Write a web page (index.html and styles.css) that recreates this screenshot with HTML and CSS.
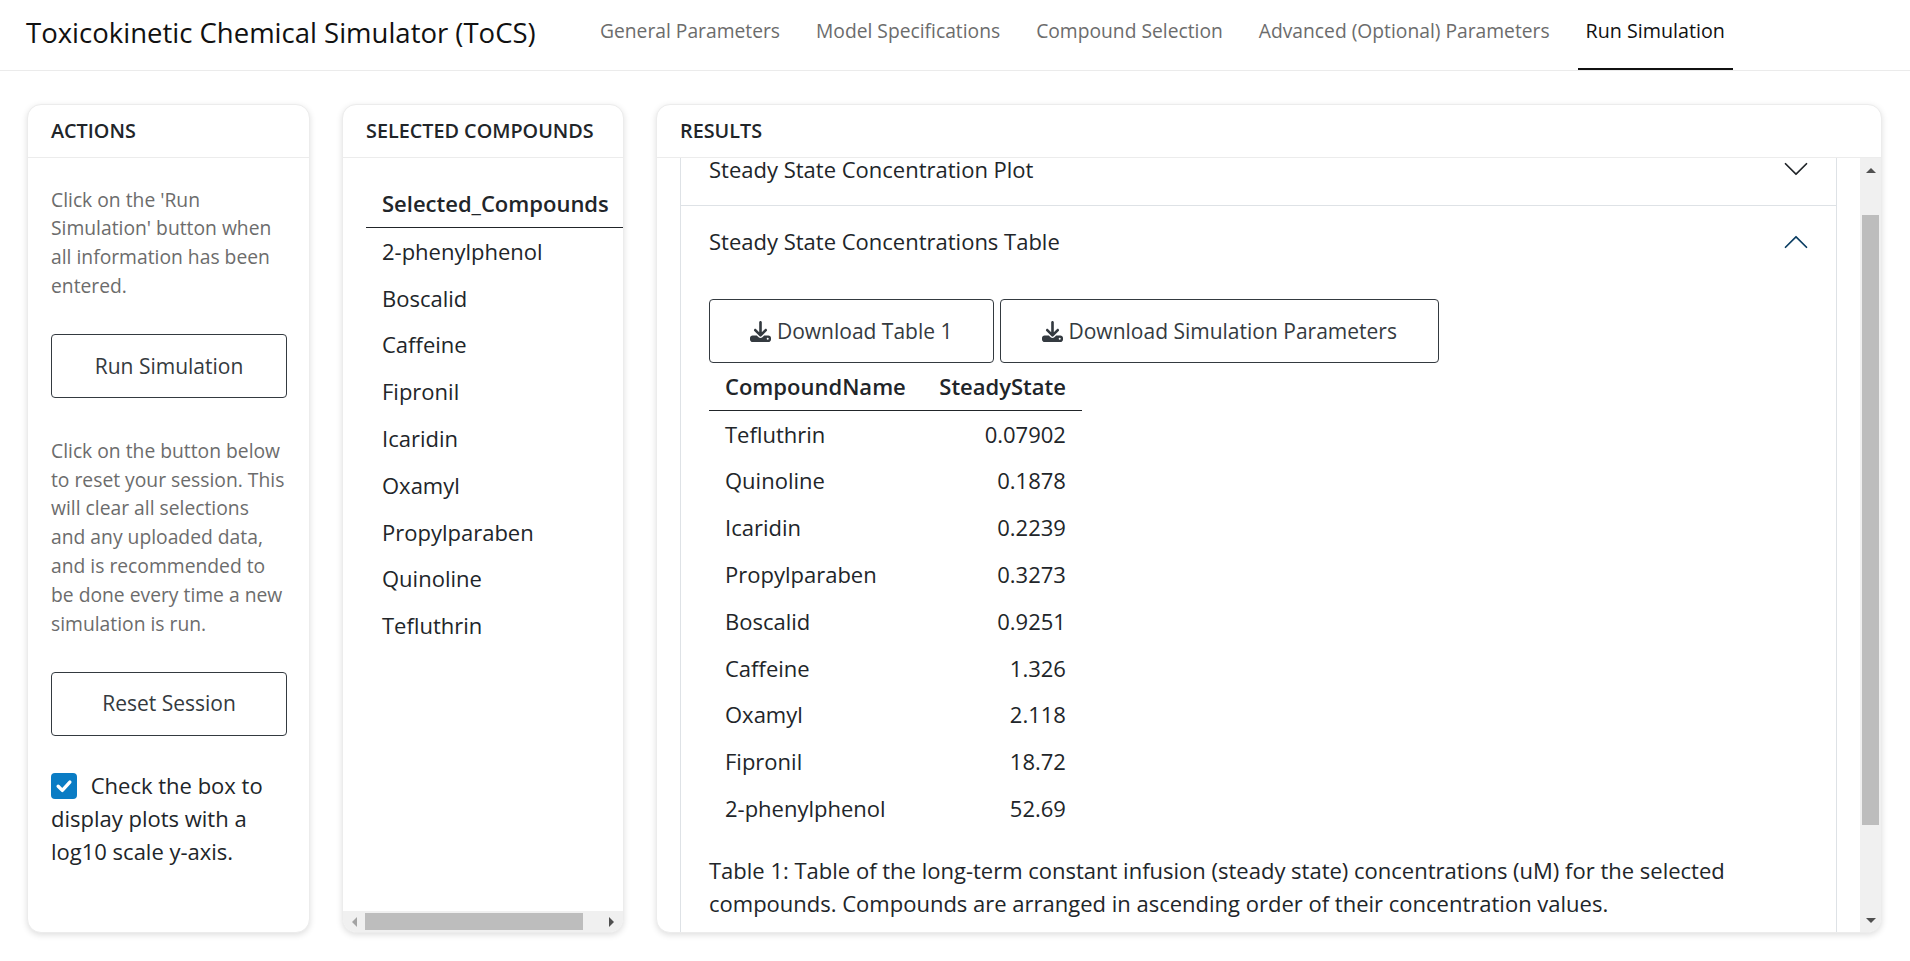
FILE: index.html
```html
<!DOCTYPE html>
<html lang="en">
<head>
  <meta charset="UTF-8" />
  <title>Toxicokinetic Chemical Simulator (ToCS)</title>
  <link rel="stylesheet" href="styles.css">
</head>
<body>

  <header class="navbar">
    <div class="brand">Toxicokinetic Chemical Simulator (ToCS)</div>
    <nav class="tabs">
      <a class="tab">General Parameters</a>
      <a class="tab">Model Specifications</a>
      <a class="tab">Compound Selection</a>
      <a class="tab">Advanced (Optional) Parameters</a>
      <a class="tab active">Run Simulation</a>
    </nav>
  </header>

  <main class="layout">

    <section class="card">
      <div class="card-header">ACTIONS</div>
      <div class="actions-body">
        <p class="muted">Click on the 'Run Simulation' button when all information has been entered.</p>
        <button class="btn btn-run">Run Simulation</button>
        <p class="muted">Click on the button below to reset your session. This will clear all selections and any uploaded data, and is recommended to be done every time a new simulation is run.</p>
        <button class="btn btn-reset">Reset Session</button>
        <div class="check-row">
          <span class="checkbox">
            <svg viewBox="0 0 20 20" width="26" height="26"><path d="M5.5 10.2l3.2 3.2 5.8-6.4" fill="none" stroke="#fff" stroke-width="2.6" stroke-linecap="round" stroke-linejoin="round"/></svg>
          </span>
          Check the box to display plots with a log10 scale y-axis.
        </div>
      </div>
    </section>

    <section class="card">
      <div class="card-header">SELECTED COMPOUNDS</div>
      <div class="compounds-body">
        <table class="data-table">
          <thead>
            <tr><th>Selected_Compounds</th></tr>
          </thead>
          <tbody>
            <tr><td>2-phenylphenol</td></tr>
            <tr><td>Boscalid</td></tr>
            <tr><td>Caffeine</td></tr>
            <tr><td>Fipronil</td></tr>
            <tr><td>Icaridin</td></tr>
            <tr><td>Oxamyl</td></tr>
            <tr><td>Propylparaben</td></tr>
            <tr><td>Quinoline</td></tr>
            <tr><td>Tefluthrin</td></tr>
          </tbody>
        </table>
      </div>
      <div class="hscroll">
        <span class="arrow arrow-left"></span>
        <span class="hscroll-thumb"></span>
        <span class="arrow arrow-right"></span>
      </div>
    </section>

    <section class="card">
      <div class="card-header">RESULTS</div>
      <div class="results-body">
        <div class="results-view">
          <div class="accordion">
            <div class="acc-item">
              <div class="acc-title">
                <span>Steady State Concentration Plot</span>
                <svg class="chevron" viewBox="0 0 16 16" width="28" height="28"><path fill="#212529" d="M1.646 4.646a.5.5 0 0 1 .708 0L8 10.293l5.646-5.647a.5.5 0 0 1 .708.708l-6 6a.5.5 0 0 1-.708 0l-6-6a.5.5 0 0 1 0-.708z"/></svg>
              </div>
            </div>
            <div class="acc-item">
              <div class="acc-title">
                <span>Steady State Concentrations Table</span>
                <svg class="chevron" viewBox="0 0 16 16" width="28" height="28"><path fill="#0a3d62" d="M1.646 11.354a.5.5 0 0 0 .708 0L8 5.707l5.646 5.647a.5.5 0 0 0 .708-.708l-6-6a.5.5 0 0 0-.708 0l-6 6a.5.5 0 0 0 0 .708z"/></svg>
              </div>
              <div class="acc-content">
                <div class="download-row">
                  <button class="btn btn-table">
                    <svg class="dl-icon" viewBox="0 0 512 512" width="21" height="21"><path d="M288 32c0-17.7-14.3-32-32-32s-32 14.3-32 32V274.7l-73.4-73.4c-12.5-12.5-32.8-12.5-45.3 0s-12.5 32.8 0 45.3l128 128c12.5 12.5 32.8 12.5 45.3 0l128-128c12.5-12.5 12.5-32.8 0-45.3s-32.8-12.5-45.3 0L288 274.7V32zM64 352c-35.3 0-64 28.7-64 64v32c0 35.3 28.7 64 64 64H448c35.3 0 64-28.7 64-64V416c0-35.3-28.7-64-64-64H346.5l-45.3 45.3c-25 25-65.5 25-90.5 0L165.5 352H64zm368 56a24 24 0 1 1 0 48 24 24 0 1 1 0-48z"/></svg>
                    Download Table 1
                  </button>
                  <button class="btn btn-params">
                    <svg class="dl-icon" viewBox="0 0 512 512" width="21" height="21"><path d="M288 32c0-17.7-14.3-32-32-32s-32 14.3-32 32V274.7l-73.4-73.4c-12.5-12.5-32.8-12.5-45.3 0s-12.5 32.8 0 45.3l128 128c12.5 12.5 32.8 12.5 45.3 0l128-128c12.5-12.5 12.5-32.8 0-45.3s-32.8-12.5-45.3 0L288 274.7V32zM64 352c-35.3 0-64 28.7-64 64v32c0 35.3 28.7 64 64 64H448c35.3 0 64-28.7 64-64V416c0-35.3-28.7-64-64-64H346.5l-45.3 45.3c-25 25-65.5 25-90.5 0L165.5 352H64zm368 56a24 24 0 1 1 0 48 24 24 0 1 1 0-48z"/></svg>
                    Download Simulation Parameters
                  </button>
                </div>
                <table class="data-table results-table">
                  <thead>
                    <tr><th>CompoundName</th><th class="num">SteadyState</th></tr>
                  </thead>
                  <tbody>
                    <tr><td>Tefluthrin</td><td class="num">0.07902</td></tr>
                    <tr><td>Quinoline</td><td class="num">0.1878</td></tr>
                    <tr><td>Icaridin</td><td class="num">0.2239</td></tr>
                    <tr><td>Propylparaben</td><td class="num">0.3273</td></tr>
                    <tr><td>Boscalid</td><td class="num">0.9251</td></tr>
                    <tr><td>Caffeine</td><td class="num">1.326</td></tr>
                    <tr><td>Oxamyl</td><td class="num">2.118</td></tr>
                    <tr><td>Fipronil</td><td class="num">18.72</td></tr>
                    <tr><td>2-phenylphenol</td><td class="num">52.69</td></tr>
                  </tbody>
                </table>
                <p class="caption">Table 1: Table of the long-term constant infusion (steady state) concentrations (uM) for the selected compounds. Compounds are arranged in ascending order of their concentration values.</p>
              </div>
            </div>
          </div>
        </div>
        <div class="vscroll">
          <span class="arrow arrow-up"></span>
          <span class="vscroll-thumb"></span>
          <span class="arrow arrow-down"></span>
        </div>
      </div>
    </section>

  </main>

</body>
</html>
```

FILE: styles.css
```css
* {
  box-sizing: border-box;
}

body {
  font-family: 'Open Sans', sans-serif;
  font-size: 22px;
  color: #212529;
  background-color: white;
  margin: 0;
  height: 961px;
  overflow: hidden;
}

/* top bar */
.navbar {
  height: 71px;
  border-bottom: 1px solid #ebebeb;
  display: flex;
  padding-left: 26px;
}

.brand {
  font-size: 27.5px;
  color: #111;
  line-height: 65px;
  width: 566px;
}

.tabs {
  display: flex;
  gap: 20px;
}

.tab {
  font-size: 19.25px;
  color: #6c6c6c;
  padding: 17px 8px 0;
  height: 70px;
}

.tab.active {
  font-size: 19.7px;
  color: #111;
  border-bottom: 2px solid #111;
}

/* panels */
.layout {
  display: grid;
  grid-template-columns: 283px 282px 1fr;
  column-gap: 32px;
  padding: 33px 28px 0 27px;
  height: 861px;
}

.card {
  background: white;
  border: 1px solid #ececec;
  border-radius: 14px;
  box-shadow: 0 2px 6px rgba(0,0,0,0.13);
  display: flex;
  flex-direction: column;
  overflow: hidden;
  height: 829px;
}

.card-header {
  flex: none;
  height: 53px;
  padding: 12px 23px 0;
  font-size: 19.8px;
  font-weight: 600;
  color: #212529;
  border-bottom: 1px solid #ececec;
}

/* left column */
.actions-body {
  padding: 27.6px 23px 0;
}

.muted {
  font-size: 19.3px;
  line-height: 28.8px;
  color: #6c6c6c;
  margin: 0 0 33.4px;
}

.btn {
  display: block;
  height: 64px;
  font-family: inherit;
  font-size: 21px;
  color: #343a40;
  background: white;
  border: 1px solid #343a40;
  border-radius: 4px;
}

.btn-run,
.btn-reset {
  width: 236px;
}

.btn-run {
  margin-bottom: 38.6px;
}

.btn-reset {
  padding-bottom: 3px;
}

.check-row {
  margin-top: 33px;
  line-height: 33px;
}

.checkbox {
  display: inline-block;
  width: 26px;
  height: 26px;
  background: #0a7cc4;
  border-radius: 4px;
  margin-right: 8px;
  vertical-align: -5px;
}

.checkbox svg {
  display: block;
}

/* tables */
.data-table {
  border-collapse: collapse;
}

.data-table th,
.data-table td {
  padding: 8px 16px;
  line-height: 30.8px;
  text-align: left;
  white-space: nowrap;
}

.data-table th {
  font-weight: 600;
  border-bottom: 1px solid #212529;
}

.data-table .num {
  text-align: right;
}

.results-table th:first-child,
.results-table td:first-child {
  padding-right: 17.5px;
}

/* selected compounds */
.compounds-body {
  flex: 1;
  overflow: hidden;
  padding: 22px 0 0 23px;
}

.hscroll {
  flex: none;
  height: 21px;
  background: #f0f0f0;
  display: flex;
  align-items: center;
  padding: 0 9px;
}

.hscroll-thumb {
  width: 218px;
  height: 17px;
  background: #bdbdbd;
  margin-left: 8px;
  margin-right: auto;
}

/* results */
.results-body {
  flex: 1;
  min-height: 0;
  display: flex;
  padding-left: 23px;
}

.results-view {
  width: 1157px;
  overflow: hidden;
}

.accordion {
  border-left: 1px solid #dee2e6;
  border-right: 1px solid #dee2e6;
  margin-top: -25px;
}

.acc-item {
  border-bottom: 1px solid #dee2e6;
}

.acc-title {
  height: 72px;
  padding: 0 28px;
  display: flex;
  align-items: center;
  justify-content: space-between;
}

.acc-item + .acc-item .acc-title span {
  margin-bottom: 2px;
}

.chevron {
  margin-right: -2px;
}

.acc-content {
  padding: 20.9px 28px 40px;
}

.download-row {
  display: flex;
  gap: 6px;
}

.btn-table {
  width: 285px;
}

.btn-params {
  width: 439px;
}

.dl-icon {
  fill: #343a40;
  vertical-align: -3px;
}

.caption {
  margin: 22.5px 0 0;
  line-height: 33px;
}

.vscroll {
  flex: none;
  width: 21px;
  margin-left: 23px;
  background: #f0f0f0;
  display: flex;
  flex-direction: column;
  align-items: center;
  padding: 10px 0 9px;
}

.vscroll-thumb {
  width: 17px;
  height: 610px;
  background: #bdbdbd;
  margin-top: 42px;
  margin-bottom: auto;
}

/* little scrollbar triangles */
.arrow {
  flex: none;
  width: 0;
  height: 0;
  border-style: solid;
  border-color: transparent;
}

.arrow-up {
  border-width: 0 5px 5px;
  border-bottom-color: #505050;
}

.arrow-down {
  border-width: 5px 5px 0;
  border-top-color: #505050;
}

.arrow-left {
  border-width: 5px 5px 5px 0;
  border-right-color: #a3a3a3;
}

.arrow-right {
  border-width: 5px 0 5px 5px;
  border-left-color: #505050;
}
```
